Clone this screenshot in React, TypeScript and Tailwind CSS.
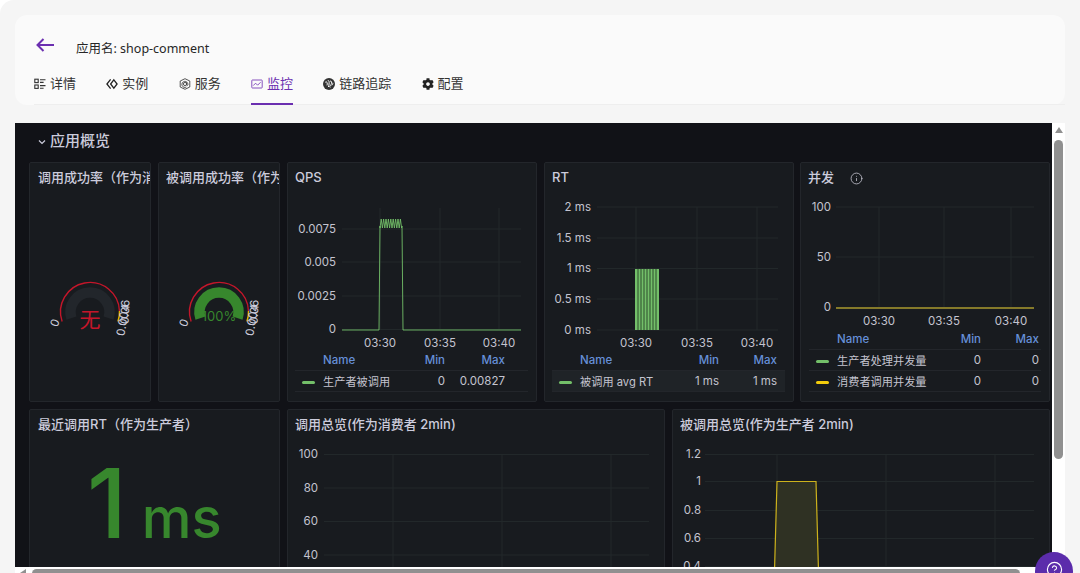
import type { ReactNode } from "react";
import { CircleHelp, Info } from "lucide-react";
import { FaCog } from "react-icons/fa";

const GRID = "#22282a";

function polar(cx: number, cy: number, r: number, deg: number) {
  const rad = (deg * Math.PI) / 180;
  return `${(cx + r * Math.cos(rad)).toFixed(2)} ${(cy + r * Math.sin(rad)).toFixed(2)}`;
}

function arc(cx: number, cy: number, r: number, from: number, to: number) {
  const large = to - from > 180 ? 1 : 0;
  return `M${polar(cx, cy, r, from)} A${r} ${r} 0 ${large} 1 ${polar(cx, cy, r, to)}`;
}

function Panel({
  title,
  info,
  className,
  titleClass = "pl-[7px]",
  children,
}: {
  title: string;
  info?: boolean;
  className: string;
  titleClass?: string;
  children: ReactNode;
}) {
  return (
    <section
      className={`h-[240px] shrink-0 overflow-hidden rounded-[2px] border border-[#23262b] bg-[#181b1f] ${className}`}
    >
      <div className={`flex h-[29px] items-center gap-[16px] whitespace-nowrap pt-[1px] text-[13px] font-medium text-[#ccccdc] ${titleClass}`}>
        <span className="min-w-0 overflow-hidden">{title}</span>
        {info && <Info className="h-[13px] w-[13px] shrink-0 text-[#c4c4cf]" strokeWidth={1.5} />}
      </div>
      {children}
    </section>
  );
}

function Gauge({
  value,
  valueClass,
  valueY,
  fill,
}: {
  value: string;
  valueClass: string;
  valueY: number;
  fill: string;
}) {
  // gauge is centred on (60, 120) of the panel body
  const cx = 60;
  const cy = 120;
  return (
    <svg width={120} height={205} viewBox="0 0 120 205" className="block">
      <path d={arc(cx, cy, 19.5, 162, 378)} fill="none" stroke={fill} strokeWidth={10.5} />
      <path d={arc(cx, cy, 29.5, 161, 358)} fill="none" stroke="#c4162a" strokeWidth={1.4} />
      <path d={arc(cx, cy, 29.5, 358, 379)} fill="none" stroke="#e0b400" strokeWidth={1.4} />
      <text x={cx} y={valueY} textAnchor="middle" className={valueClass}>
        {value}
      </text>
      <text x={0} y={0} textAnchor="middle" transform="translate(25 131) rotate(-68) translate(0 4)" className="fill-[#ccccdc] text-[11.5px]">
        0
      </text>
      <text x={0} y={0} textAnchor="middle" transform="translate(95 120) rotate(-88) translate(0 4)" className="fill-[#ccccdc] text-[11.5px]">
        0.06
      </text>
      <text x={0} y={0} textAnchor="middle" transform="translate(93 128) rotate(-80) translate(0 4)" className="fill-[#ccccdc] text-[11.5px]">
        0.004
      </text>
    </svg>
  );
}

type Tick = { label: string; at: number };

function TimeChart({
  x,
  y,
  w,
  h,
  left,
  right,
  labelRight,
  top,
  bottom,
  yTicks,
  xTicks,
  xLabelY,
  children,
}: {
  x: number;
  y: number;
  w: number;
  h: number;
  left: number;
  right: number;
  labelRight: number;
  top: number;
  bottom: number;
  yTicks: Tick[];
  xTicks: Tick[];
  xLabelY?: number;
  children?: ReactNode;
}) {
  return (
    <svg width={w} height={h} viewBox={`${x} ${y} ${w} ${h}`} className="block">
      {yTicks.map((t) => (
        <g key={t.label}>
          <line x1={left} x2={right} y1={t.at} y2={t.at} stroke={GRID} />
          <text x={labelRight} y={t.at + 3.5} textAnchor="end" className="fill-[#c4c4cf] text-[11.5px]">
            {t.label}
          </text>
        </g>
      ))}
      {xTicks.map((t) => (
        <g key={t.at}>
          <line x1={t.at} x2={t.at} y1={top} y2={bottom} stroke={GRID} />
          {xLabelY && t.label && (
            <text x={t.at} y={xLabelY + 4} textAnchor="middle" className="fill-[#c4c4cf] text-[11.5px]">
              {t.label}
            </text>
          )}
        </g>
      ))}
      {children}
    </svg>
  );
}

function Legend({
  className,
  columns,
  rows,
}: {
  className: string;
  columns: string;
  rows: { name: string; color: string; min: string; max: string; active?: boolean }[];
}) {
  return (
    <div className={className}>
      <div className={`grid h-[21px] items-center border-b border-[#23262b] pt-[2px] text-[11.5px] font-medium text-[#6690d9] ${columns}`}>
        <span />
        <span>Name</span>
        <span className="text-right">Min</span>
        <span className="text-right">Max</span>
      </div>
      {rows.map((row) => (
        <div
          key={row.name}
          className={`grid h-[21px] items-center border-b border-[#23262b] pt-[2px] text-[11.5px] text-[#c4c4cf] ${columns} ${row.active ? "bg-[#1f2327]" : ""}`}
        >
          <span className="ml-[7px] h-[3px] w-[13px] rounded-full" style={{ backgroundColor: row.color }} />
          <span className="whitespace-nowrap text-[11.2px]">{row.name}</span>
          <span className="text-right">{row.min}</span>
          <span className="text-right">{row.max}</span>
        </div>
      ))}
    </div>
  );
}

function IconDetail() {
  return (
    <svg width="12" height="12" viewBox="0 0 12 12" fill="none" stroke="#333" strokeWidth="1.1">
      <rect x="0.8" y="1.2" width="3.4" height="3.4" />
      <rect x="0.8" y="7" width="3.4" height="3.4" />
      <path d="M6 1.8h5.5M6 4.4h3.6M6 7.6h5.5M6 10.2h3.6" />
    </svg>
  );
}

function IconInstance() {
  return (
    <svg width="12" height="12" viewBox="0 0 13 12" fill="none" stroke="#222" strokeWidth="1.4">
      <path d="M5 1 1 6l4 5" />
      <path d="M8.5 1.5 12 6l-3.5 4.5L5 6z" />
    </svg>
  );
}

function IconService() {
  return (
    <svg width="12" height="12" viewBox="0 0 12 12" fill="none" stroke="#444" strokeWidth="0.9">
      <path d="M6 .7 10.8 3v6L6 11.3 1.2 9V3z" />
      <circle cx="6" cy="6" r="1.6" />
      <path d="M7.6 4.4v2.4c0 .9 1.3.9 1.3-.3A3 3 0 1 0 7.4 9" />
    </svg>
  );
}

function IconMonitor() {
  return (
    <svg width="12" height="12" viewBox="0 0 12 12" fill="none" stroke="#7a3fb8" strokeWidth="0.9">
      <rect x="0.8" y="2" width="10.4" height="8" rx="0.6" />
      <path d="M2.2 7.6 4.6 5.2l2 2 3-3" />
    </svg>
  );
}

function IconTrace() {
  return (
    <svg width="12" height="12" viewBox="0 0 12 12">
      <circle cx="6" cy="6" r="6" fill="#333" />
      <path
        d="M2.2 4.4c1.6-1.8 2.6.8 1.8 3M4.8 2.6c1.8-.6 1.6 3.4.6 6.4M7.2 3c1.8-.4 1.6 2.8.5 4s-1.2 2.2-.4 2.4M9.7 4.8c.3 1.1-.2 2-.9 2.6"
        fill="none"
        stroke="#fff"
        strokeWidth="1"
      />
    </svg>
  );
}

const TABS = [
  { label: "详情", icon: <IconDetail /> },
  { label: "实例", icon: <IconInstance /> },
  { label: "服务", icon: <IconService /> },
  { label: "监控", icon: <IconMonitor />, active: true },
  { label: "链路追踪", icon: <IconTrace /> },
  { label: "配置", icon: <FaCog className="h-[12px] w-[12px] text-[#222]" /> },
];

const QPS_ZIGZAG = Array.from({ length: 19 }, (_, i) => `${380 + i * 1.2},${i % 2 ? 219 : 228}`).join(" ");
const RT_GAPS = [638, 641, 644, 647, 650, 653, 656];

export default function App() {
  return (
    <div className="relative flex h-[573px] w-[1080px] flex-col overflow-hidden rounded-tl-[14px] bg-[#f5f5f5] [font-family:Inter,'Noto_Sans_CJK_SC',sans-serif]">
      <header className="mx-[15px] mt-[15px] h-[90px] shrink-0 rounded-xl bg-[#fafafa] [font-family:'Noto_Sans','Noto_Sans_CJK_SC',sans-serif]">
        <div className="flex h-[48px] items-start pl-[21px] pt-[23px]">
          <svg width="18" height="14" viewBox="0 0 18 14" fill="none" stroke="#6b2fb0" strokeWidth="2">
            <path d="M1.5 7H18M7.5 1 1.5 7l6 6" />
          </svg>
          <span className="ml-[22px] mt-[2px] text-[12.5px] leading-[18px] text-[#262626]">应用名: shop-comment</span>
        </div>
        <nav className="ml-[19px] flex h-[42px] gap-[30.3px] border-b border-[#eeeeee]">
          {TABS.map((tab) => (
            <div
              key={tab.label}
              className={`flex h-[42px] items-center gap-[4px] border-b-2 pt-[2px] text-[13px] ${
                tab.active ? "border-[#6b2fb0] text-[#6b2fb0]" : "border-transparent text-[#333333]"
              }`}
            >
              {tab.icon}
              <span>{tab.label}</span>
            </div>
          ))}
        </nav>
      </header>

      <div className="mt-[18px] flex min-h-0 flex-1 pl-[15px] pr-[15px]">
        <main className="min-w-0 flex-1 overflow-hidden bg-[#111217] pl-[14px]">
          <div className="flex h-[39px] items-center gap-[4px] pb-[2px] pl-[9px] text-[15px] font-medium text-[#ccccdc]">
            <svg width="8" height="8" viewBox="0 0 8 8" fill="none" stroke="#ccccdc" strokeWidth="1.2">
              <path d="M1 2.5 4 5.5 7 2.5" />
            </svg>
            <span>应用概览</span>
          </div>

          <div className="flex">
            <Panel title="调用成功率（作为消费者）" titleClass="pl-[8px]" className="w-[122px]">
              <Gauge value="无" valueClass="fill-[#c4162a] text-[21px]" valueY={135} fill="#22262b" />
            </Panel>
            <Panel title="被调用成功率（作为生产者）" className="ml-[7px] w-[122px]">
              <Gauge value="100%" valueClass="fill-[#37872d] text-[13px]" valueY={129} fill="#37872d" />
            </Panel>
            <Panel title="QPS" className="ml-[7px] w-[250px]">
              <TimeChart
                x={288}
                y={192}
                w={248}
                h={158}
                left={342}
                right={521}
                labelRight={336}
                top={208}
                bottom={330}
                xLabelY={343}
                yTicks={[
                  { label: "0.0075", at: 229 },
                  { label: "0.005", at: 262 },
                  { label: "0.0025", at: 296 },
                  { label: "0", at: 329.5 },
                ]}
                xTicks={[
                  { label: "03:30", at: 380 },
                  { label: "03:35", at: 440 },
                  { label: "03:40", at: 499 },
                ]}
              >
                <polyline
                  points={`342,330 379,330 380,226 ${QPS_ZIGZAG} 402,226 403,330 521,330`}
                  fill="none"
                  stroke="#73bf69"
                  strokeWidth={0.9}
                />
              </TimeChart>
              <Legend
                className="ml-[7px] w-[233px]"
                columns="grid-cols-[28px_82px_40px_60px] pr-[23px]"
                rows={[{ name: "生产者被调用", color: "#73bf69", min: "0", max: "0.00827" }]}
              />
            </Panel>
            <Panel title="RT" className="ml-[7px] w-[250px]">
              <TimeChart
                x={545}
                y={192}
                w={248}
                h={158}
                left={597}
                right={778}
                labelRight={591}
                top={207}
                bottom={330}
                xLabelY={343}
                yTicks={[
                  { label: "2 ms", at: 207 },
                  { label: "1.5 ms", at: 238 },
                  { label: "1 ms", at: 268.5 },
                  { label: "0.5 ms", at: 299 },
                  { label: "0 ms", at: 330 },
                ]}
                xTicks={[
                  { label: "03:30", at: 636 },
                  { label: "03:35", at: 697 },
                  { label: "03:40", at: 757 },
                ]}
              >
                <rect x={635} y={269} width={24} height={61} fill="#73bf69" />
                {RT_GAPS.map((gap) => (
                  <line key={gap} x1={gap} x2={gap} y1={269} y2={330} stroke="#2d4a2c" />
                ))}
              </TimeChart>
              <Legend
                className="ml-[7px] w-[233px]"
                columns="grid-cols-[28px_99px_40px_58px] pr-[8px]"
                rows={[{ name: "被调用 avg RT", color: "#73bf69", min: "1 ms", max: "1 ms", active: true }]}
              />
            </Panel>
            <Panel title="并发" info className="ml-[6px] w-[250px]">
              <TimeChart
                x={801}
                y={192}
                w={248}
                h={137}
                left={836}
                right={1034}
                labelRight={831}
                top={207}
                bottom={308}
                xLabelY={321}
                yTicks={[
                  { label: "100", at: 207 },
                  { label: "50", at: 257 },
                  { label: "0", at: 307.5 },
                ]}
                xTicks={[
                  { label: "03:30", at: 879 },
                  { label: "03:35", at: 944 },
                  { label: "03:40", at: 1011 },
                ]}
              >
                <line x1={836} x2={1034} y1={308} y2={308} stroke="#857a2a" strokeWidth={2} />
              </TimeChart>
              <Legend
                className="ml-[8px] w-[232px]"
                columns="grid-cols-[28px_114px_30px_58px] pr-[2px]"
                rows={[
                  { name: "生产者处理并发量", color: "#73bf69", min: "0", max: "0" },
                  { name: "消费者调用并发量", color: "#f2cc0c", min: "0", max: "0" },
                ]}
              />
            </Panel>
          </div>

          <div className="mt-[7px] flex">
            <Panel title="最近调用RT（作为生产者）" titleClass="pl-[8px]" className="w-[251px]">
              <div className="ml-[57px] mt-[4px] flex items-baseline gap-[15px] font-medium leading-[120px] text-[#37872d]">
                <span className="text-[96px]">1</span>
                <span className="text-[56px]">ms</span>
              </div>
            </Panel>
            <Panel title="调用总览(作为消费者 2min)" className="ml-[7px] w-[378px]">
              <TimeChart
                x={288}
                y={439}
                w={376}
                h={150}
                left={324}
                right={649}
                labelRight={318}
                top={454}
                bottom={589}
                yTicks={[
                  { label: "100", at: 454.5 },
                  { label: "80", at: 488 },
                  { label: "60", at: 521.5 },
                  { label: "40", at: 555 },
                ]}
                xTicks={[
                  { label: "", at: 393 },
                  { label: "", at: 502 },
                  { label: "", at: 611 },
                ]}
              />
            </Panel>
            <Panel title="被调用总览(作为生产者 2min)" className="ml-[7px] w-[378px]">
              <TimeChart
                x={673}
                y={439}
                w={376}
                h={150}
                left={705}
                right={1034}
                labelRight={701}
                top={454}
                bottom={589}
                yTicks={[
                  { label: "1.2", at: 454.5 },
                  { label: "1", at: 481.5 },
                  { label: "0.8", at: 510.5 },
                  { label: "0.6", at: 538.5 },
                  { label: "0.4", at: 566.5 },
                ]}
                xTicks={[
                  { label: "", at: 777 },
                  { label: "", at: 886 },
                  { label: "", at: 995 },
                ]}
              >
                <polygon
                  points="774,589 777,481.5 816,481.5 819,589"
                  fill="#2f3123"
                  stroke="#cdb21c"
                  strokeWidth={1.2}
                />
              </TimeChart>
            </Panel>
          </div>
        </main>

        {/* vertical scrollbar */}
        <div className="flex w-[13px] shrink-0 flex-col items-center bg-white pt-[4px]">
          <div className="h-0 w-0 border-x-[4.5px] border-b-[6px] border-x-transparent border-b-[#909090]" />
          <div className="mt-[7px] h-[319px] w-[9px] rounded-full bg-[#909090]" />
        </div>
      </div>

      {/* horizontal scrollbar */}
      <div className="mx-[15px] flex h-[6px] shrink-0 items-start gap-[6px] bg-white pl-[5px] pt-[2px]">
        <div className="h-0 w-0 border-y-[4.5px] border-r-[6px] border-y-transparent border-r-[#909090]" />
        <div className="h-[9px] w-[988px] rounded-full bg-[#909090]" />
      </div>

      <div className="absolute left-[1035px] top-[552px] flex h-[38px] w-[38px] items-start justify-center rounded-full bg-[#5b2cab] pt-[9px]">
        <CircleHelp className="h-[17px] w-[17px] text-white" strokeWidth={1.6} />
      </div>
    </div>
  );
}
